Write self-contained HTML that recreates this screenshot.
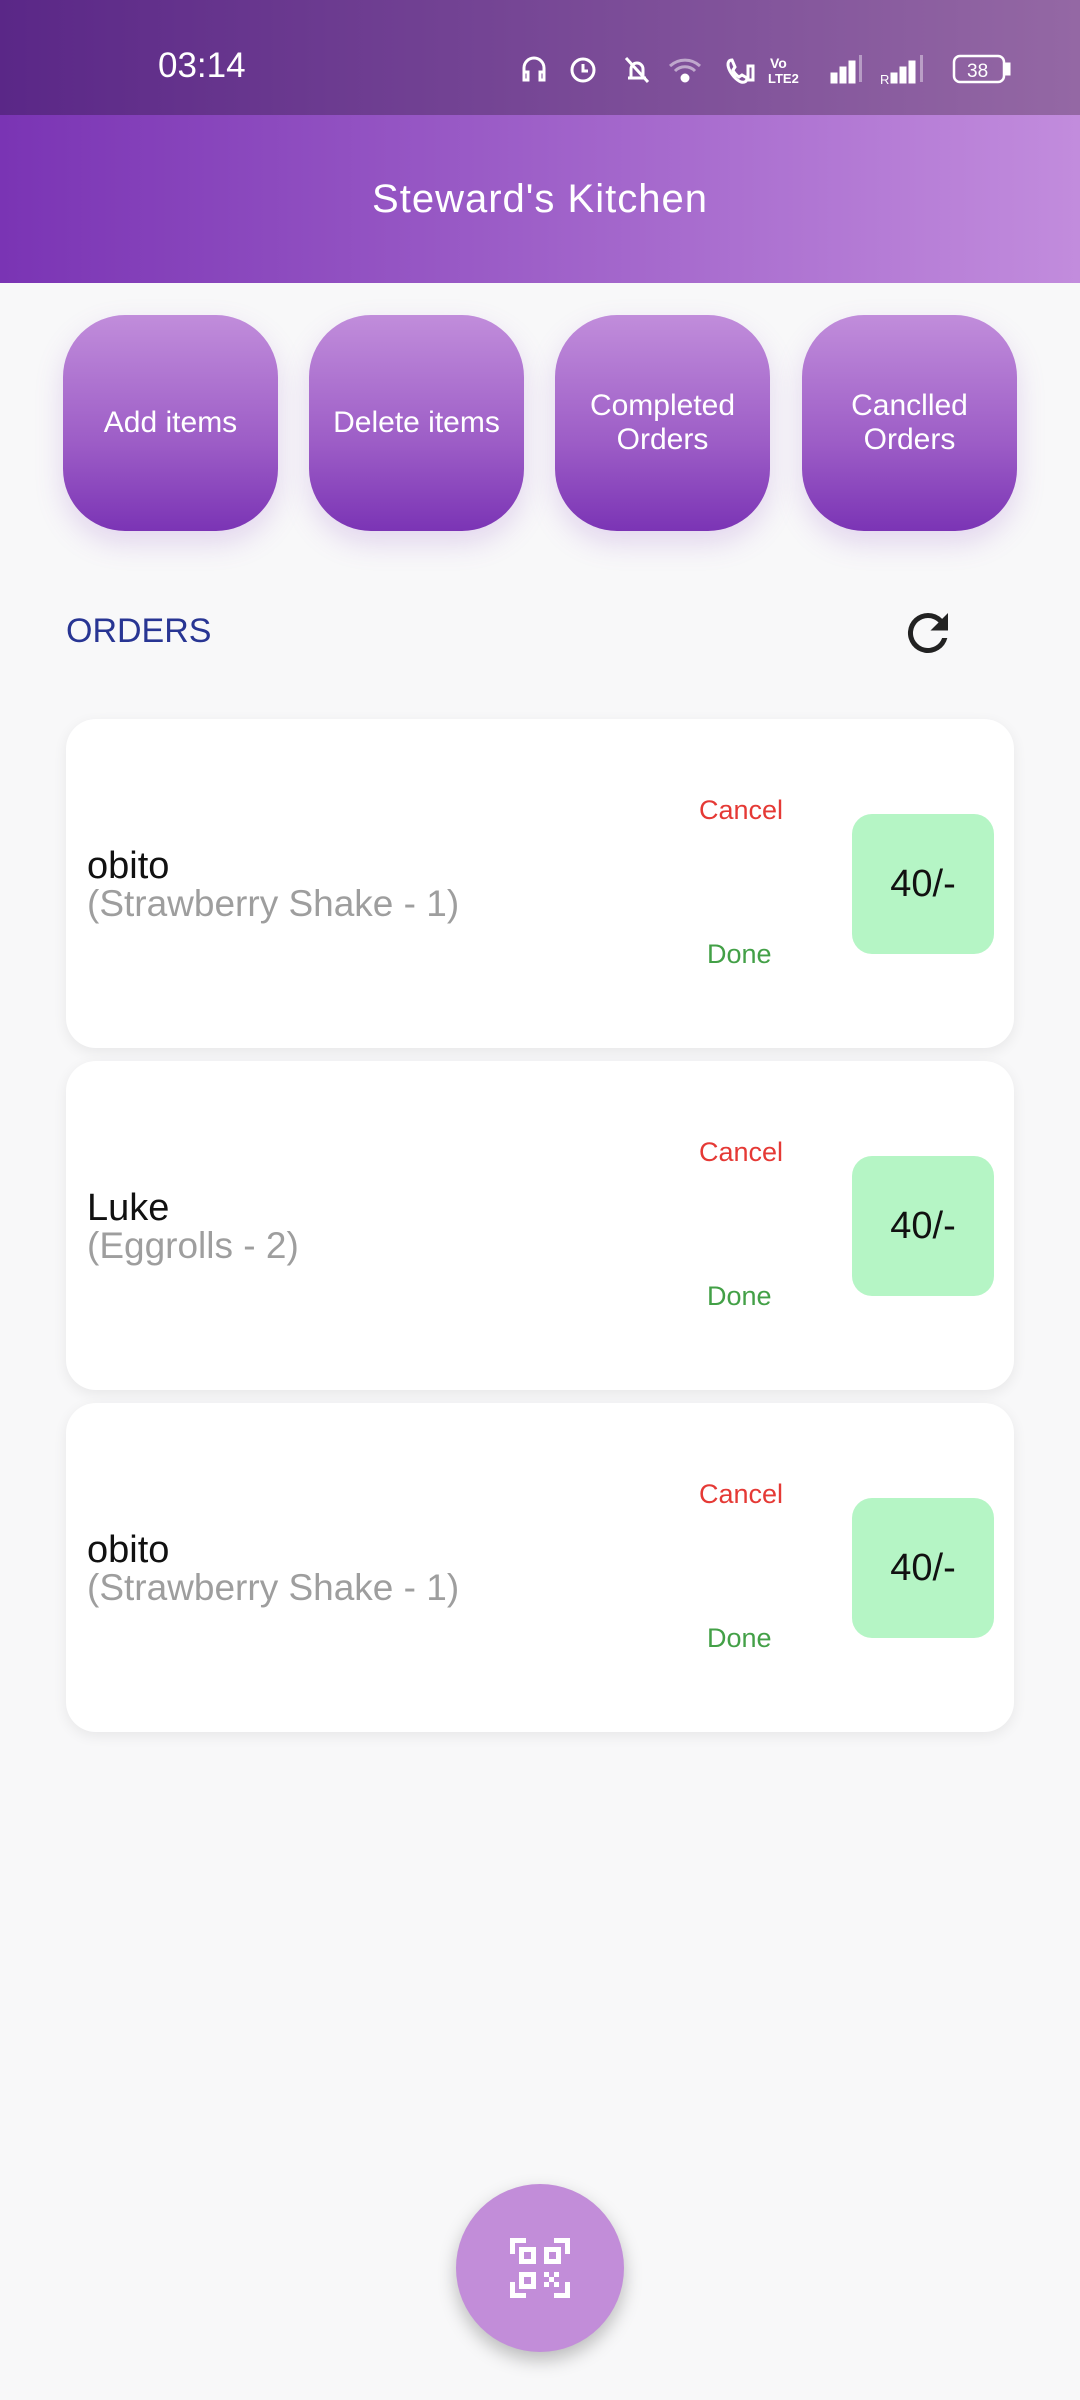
<!DOCTYPE html>
<html><head><meta charset="utf-8"><style>
*{margin:0;padding:0;box-sizing:border-box}
body{width:1080px;height:2400px;background:#f8f8f9;font-family:"Liberation Sans",sans-serif;position:relative;overflow:hidden}
.status{position:absolute;left:0;top:0;width:1080px;height:115px;background:linear-gradient(90deg,#5a2787,#9468a4);color:#fff}
.time{position:absolute;left:158px;top:46px;font-size:35px}
.header{position:absolute;left:0;top:115px;width:1080px;height:168px;background:linear-gradient(90deg,#7a34b4,#c28cdd);color:#fff;text-align:center;font-size:40px;line-height:168px;letter-spacing:1px}
.btn{position:absolute;top:315px;width:215px;height:216px;border-radius:62px;background:linear-gradient(180deg,#c18ddb,#9c5cc6 60%,#7b34b5);color:#fff;font-size:30px;display:flex;align-items:center;justify-content:center;text-align:center;line-height:34px;box-shadow:0 12px 28px rgba(150,90,200,.22)}
.orders{position:absolute;left:66px;top:612px;font-size:34px;color:#283593}
.card{position:absolute;left:66px;width:948px;height:329px;background:#fff;border-radius:30px;box-shadow:0 4px 14px rgba(0,0,0,.07)}
.name{position:absolute;left:21px;top:126px;font-size:38px;color:#111}
.det{position:absolute;left:21px;top:164px;font-size:37px;color:#9e9e9e}
.cancel{position:absolute;left:633px;top:76px;font-size:27px;color:#e53935}
.done{position:absolute;left:641px;top:220px;font-size:27px;color:#43a047}
.price{position:absolute;left:786px;top:95px;width:142px;height:140px;background:#b5f5c5;border-radius:20px;font-size:38px;color:#111;display:flex;align-items:center;justify-content:center}
.fab{position:absolute;left:456px;top:2184px;width:168px;height:168px;border-radius:50%;background:#c28dd9;box-shadow:0 8px 18px rgba(0,0,0,.25)}
</style></head><body>
<div class="status"><div class="time">03:14</div>
<svg style="position:absolute;left:520px;top:52px" width="500" height="34" viewBox="0 0 500 34" fill="none" stroke="#fff" stroke-width="3">
<path d="M4 24v-8a10 10 0 0 1 20 0v8M4 20h4v8H4zM20 20h4v8h-4z"/>
<circle cx="63" cy="18" r="11"/><path d="M63 12v7h5"/>
<path d="M108 26h18M111 26v-9a6 6 0 0 1 12 0v9M106 6l22 24"/>
<path d="M150 14a22 22 0 0 1 30 0M155 19a14 14 0 0 1 20 0" stroke-opacity=".5"/><circle cx="165" cy="26" r="3" fill="#fff"/>
<path d="M212 8c-4 0-5 4-3 9s7 11 12 13c4 1 6-1 6-4l-5-3-3 2c-3-2-5-4-6-7l2-3z"/><rect x="228" y="14" width="5" height="14"/>
<text x="250" y="16" fill="#fff" stroke="none" font-size="14" font-weight="bold">Vo</text><text x="248" y="31" fill="#fff" stroke="none" font-size="13" font-weight="bold">LTE2</text>
<rect x="312" y="22" width="4" height="8" fill="#fff"/><rect x="321" y="16" width="4" height="14" fill="#fff"/><rect x="330" y="10" width="4" height="20" fill="#fff"/><rect x="339" y="3" width="3" height="27" fill="#fff" stroke="none" opacity=".4"/>
<text x="360" y="32" fill="#fff" stroke="none" font-size="13">R</text>
<rect x="372" y="22" width="4" height="8" fill="#fff"/><rect x="381" y="16" width="4" height="14" fill="#fff"/><rect x="390" y="10" width="4" height="20" fill="#fff"/><rect x="400" y="3" width="3" height="27" fill="#fff" stroke="none" opacity=".4"/>
<rect x="434" y="4" width="50" height="26" rx="6" stroke-width="2.5"/><rect x="486" y="12" width="3" height="10" fill="#fff"/>
<text x="447" y="25" fill="#fff" stroke="none" font-size="19">38</text>
</svg></div>
<div class="header">Steward's Kitchen</div>
<div class="btn" style="left:63px">Add items</div>
<div class="btn" style="left:309px">Delete items</div>
<div class="btn" style="left:555px">Completed<br>Orders</div>
<div class="btn" style="left:802px">Canclled<br>Orders</div>
<div class="orders">ORDERS</div>
<svg style="position:absolute;left:898px;top:603px" width="60" height="60" viewBox="0 0 24 24"><path fill="#222" d="M17.65 6.35A7.95 7.95 0 0 0 12 4a8 8 0 1 0 7.73 10h-2.08A6 6 0 1 1 12 6c1.66 0 3.14.69 4.22 1.78L13 11h7V4z"/></svg>
<div class="card" style="top:719px"><div class="name">obito</div><div class="det">(Strawberry Shake - 1)</div><div class="cancel">Cancel</div><div class="done">Done</div><div class="price">40/-</div></div>
<div class="card" style="top:1061px"><div class="name">Luke</div><div class="det">(Eggrolls - 2)</div><div class="cancel">Cancel</div><div class="done">Done</div><div class="price">40/-</div></div>
<div class="card" style="top:1403px"><div class="name">obito</div><div class="det">(Strawberry Shake - 1)</div><div class="cancel">Cancel</div><div class="done">Done</div><div class="price">40/-</div></div>
<div class="fab"><svg style="position:absolute;left:54px;top:54px" width="60" height="60" viewBox="0 0 60 60" fill="#fff">
<path d="M0 0h16v5H5v11H0zM44 0h16v16h-5V5H44zM0 44h5v11h11v5H0zM55 44h5v16H44v-5h11z"/>
<path fill-rule="evenodd" d="M9 9h17v17H9zM14 14v7h7v-7zM34 9h17v17H34zM39 14v7h7v-7zM9 34h17v17H9zM14 39v7h7v-7z"/>
<path d="M34 34h5v5h-5zM44 34h5v5h-5zM39 39h5v5h-5zM34 44h5v5h-5zM44 44h5v5h-5z"/></svg></div>
</body></html>
